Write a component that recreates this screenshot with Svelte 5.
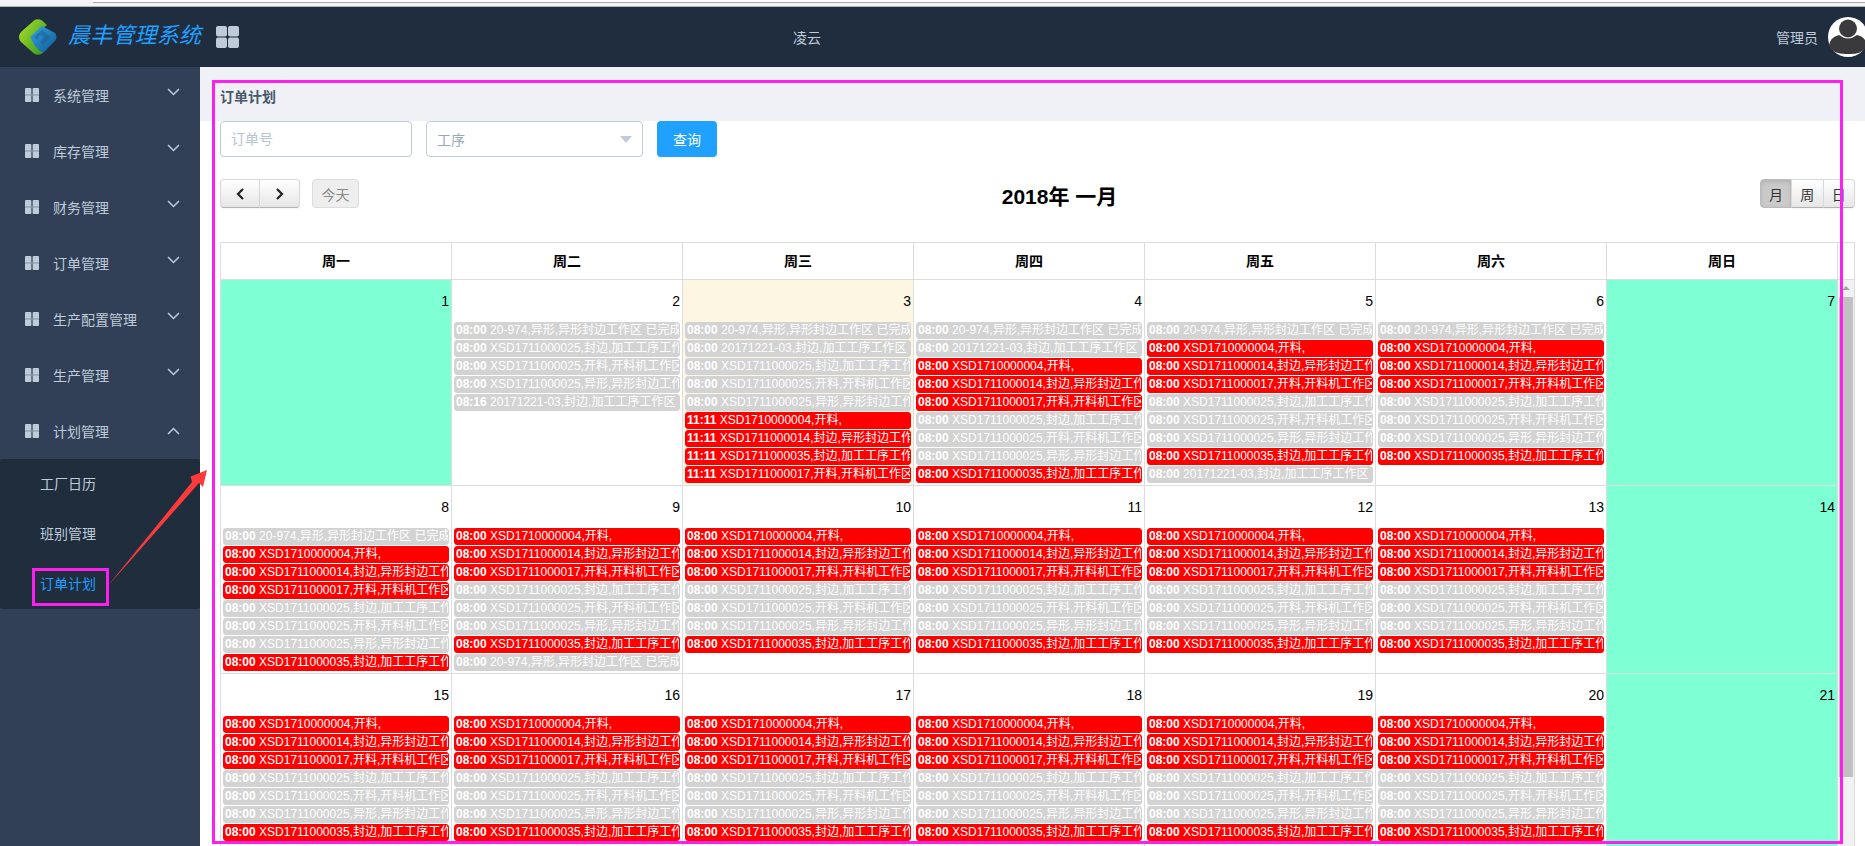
<script>
  const nav = ['系统管理', '库存管理', '财务管理', '订单管理', '生产配置管理', '生产管理'];
  const subs = ['工厂日历', '班别管理', '订单计划'];
  const weekdays = ['周一', '周二', '周三', '周四', '周五', '周六', '周日'];

  const TXT = {
    done: ['20-974,异形,异形封边工作区 已完成', 0],
    cut: ['20171221-03,封边,加工工序工作区', 0],
    a: ['XSD1710000004,开料,', 1],
    b: ['XSD1711000014,封边,异形封边工作区', 1],
    c: ['XSD1711000017,开料,开料机工作区', 1],
    d: ['XSD1711000025,封边,加工工序工作区', 0],
    e: ['XSD1711000025,开料,开料机工作区', 0],
    f: ['XSD1711000025,异形,异形封边工作区', 0],
    g: ['XSD1711000035,封边,加工工序工作区', 1]
  };
  const list = (keys, time = '08:00') =>
    keys.split(' ').map((k) => ({ time, text: TXT[k][0], red: TXT[k][1] === 1 }));
  const week = 'a b c d e f g';

  const wed = [...list('done cut d e f'), ...list('a b g c', '11:11')];
  const tue = [...list('done d e f'), ...list('cut', '08:16')];

  const rows = [
    [
      { n: 1, off: true, ev: [] },
      { n: 2, ev: tue },
      { n: 3, today: true, ev: wed },
      { n: 4, ev: list('done cut a b c d e f g') },
      { n: 5, ev: list('done a b c d e f g cut') },
      { n: 6, ev: list('done a b c d e f g') },
      { n: 7, off: true, ev: [] }
    ],
    [
      { n: 8, ev: list('done a b c d e f g') },
      { n: 9, ev: list('a b c d e f g done') },
      { n: 10, ev: list(week) },
      { n: 11, ev: list(week) },
      { n: 12, ev: list(week) },
      { n: 13, ev: list(week) },
      { n: 14, off: true, ev: [] }
    ],
    [
      { n: 15, ev: list(week) },
      { n: 16, ev: list(week) },
      { n: 17, ev: list(week) },
      { n: 18, ev: list(week) },
      { n: 19, ev: list(week) },
      { n: 20, ev: list(week) },
      { n: 21, off: true, ev: [] }
    ]
  ];
</script>

<div class="page">
  <div class="chrome"><span class="urlbar"></span></div>

  <header class="top">
    <svg class="logo" viewBox="0 0 40 36" aria-hidden="true">
      <defs>
        <linearGradient id="lg" x1="0" y1="0.2" x2="0.9" y2="0.9">
          <stop offset="0" stop-color="#a4dc2a" />
          <stop offset="1" stop-color="#3a9a24" />
        </linearGradient>
        <linearGradient id="lb" x1="0" y1="0" x2="1" y2="1">
          <stop offset="0" stop-color="#36a6e6" />
          <stop offset="1" stop-color="#0d5a94" />
        </linearGradient>
      </defs>
      <path d="M16 1.500 Q20 -1 24 1.500 L29 6 L14 18 L29 30 L24 34.500 Q20 37 16 34.500 L3 23 Q-1 18 3 13 Z" fill="url(#lg)" />
      <path d="M24 7 L37 14 Q40 18 37 22 L27 32 Q24 34 22 32 L17 27 L12 18 Z" fill="url(#lb)" />
      <path d="M16 18 L24 11 L33 18 L25 26 L22 23 L26 18 L22 16 L19 21 Z" fill="#1d5f96" opacity="0.55" />
    </svg>
    <span class="brand">晨丰管理系统</span>
    <svg class="tile" viewBox="0 0 23 22" aria-hidden="true">
      <rect x="0" y="0" width="11" height="10.5" rx="2" />
      <rect x="12" y="0" width="11" height="10.5" rx="2" />
      <rect x="0" y="11.5" width="11" height="10.5" rx="2" />
      <rect x="12" y="11.5" width="11" height="10.5" rx="2" />
    </svg>
    <span class="org">凌云</span>
    <span class="user">管理员</span>
    <svg class="avatar" viewBox="0 0 40 40" aria-hidden="true">
      <circle cx="20" cy="20" r="20" fill="#fff" />
      <circle cx="20" cy="11.500" r="9" fill="#3a3a3c" />
      <path d="M1 29 Q2 20 11 18 Q20 25 29 18 Q38 20 39 29 Q34 38 20 37 Q6 38 1 29 Z" fill="#3a3a3c" />
    </svg>
  </header>

  <div class="body">
    <aside class="side">
      {#each nav as item}
        <div class="nav-item">
          <svg class="blocks" viewBox="0 0 14 14" aria-hidden="true">
            <rect x="0" y="0" width="6.400" height="14" rx="1" />
            <rect x="7.600" y="0" width="6.400" height="14" rx="1" />
            <rect class="notch" x="0" y="6.500" width="14" height="1" />
          </svg>
          <span class="nav-label">{item}</span>
          <svg class="chev" viewBox="0 0 13 8" aria-hidden="true"><path d="M1 1 L6.500 6.500 L12 1" /></svg>
        </div>
      {/each}
      <div class="nav-item open">
        <svg class="blocks" viewBox="0 0 14 14" aria-hidden="true">
          <rect x="0" y="0" width="6.400" height="14" rx="1" />
          <rect x="7.600" y="0" width="6.400" height="14" rx="1" />
          <rect class="notch" x="0" y="6.500" width="14" height="1" />
        </svg>
        <span class="nav-label">计划管理</span>
        <svg class="chev" viewBox="0 0 13 8" aria-hidden="true"><path d="M1 7 L6.500 1.500 L12 7" /></svg>
      </div>
      <div class="subs">
        {#each subs as s, i}
          <div class="sub" class:active={i === 2}>{s}</div>
        {/each}
      </div>
    </aside>

    <main class="main">
      <div class="crumb">订单计划</div>
      <section class="panel">
        <div class="filters">
          <input class="field order" placeholder="订单号" />
          <div class="field select">
            <span>工序</span>
            <i class="caret"></i>
          </div>
          <button class="query">查询</button>
        </div>

        <div class="toolbar">
          <div class="tb-left">
            <div class="group">
              <button class="fc">
                <svg viewBox="0 0 10 14" aria-hidden="true"><path d="M8 2 L3 7 L8 12" /></svg>
              </button>
              <button class="fc">
                <svg viewBox="0 0 10 14" aria-hidden="true"><path d="M2 2 L7 7 L2 12" /></svg>
              </button>
            </div>
            <button class="fc today-btn">今天</button>
          </div>
          <h2 class="month">2018年 一月</h2>
          <div class="group views">
            <button class="fc on">月</button>
            <button class="fc">周</button>
            <button class="fc">日</button>
          </div>
        </div>

        <div class="cal">
          <div class="head">
            {#each weekdays as d}
              <div class="hcell">{d}</div>
            {/each}
            <div class="hfill"></div>
          </div>
          <div class="cal-body">
            <div class="weeks">
              {#each rows as row}
                <div class="week">
                  {#each row as cell}
                    <div class="day" class:off={cell.off} class:today={cell.today}>
                      <div class="num">{cell.n}</div>
                      {#each cell.ev as e}
                        <div class="ev" class:red={e.red}><b>{e.time}</b> {e.text}</div>
                      {/each}
                    </div>
                  {/each}
                </div>
              {/each}
            </div>
            <div class="scroll">
              <i class="up"></i>
              <div class="thumb"></div>
            </div>
          </div>
        </div>
      </section>
    </main>
  </div>

  <div class="mark big"></div>
  <div class="mark small"></div>
  <svg class="arrow" viewBox="0 0 1865 846" aria-hidden="true">
    <path d="M107 587 L192 482 L190.500 476.500 L207 470 L203 487 L199 483 Z" fill="#fb3a3a" />
  </svg>
</div>

<style>
  :global(body) {
    margin: 0;
    background: #fff;
  }
  .page {
    position: relative;
    width: 1865px;
    height: 846px;
    overflow: hidden;
    display: flex;
    flex-direction: column;
    font-family: 'Liberation Sans', 'Noto Sans CJK SC', sans-serif;
    font-size: 14px;
    color: #000;
  }
  .chrome {
    height: 7px;
    flex: none;
    box-sizing: border-box;
    background: #f4f4f4;
    border-bottom: 1px solid #b5b5b5;
    padding-left: 93px;
  }
  .urlbar {
    display: block;
    height: 2px;
    background: #fff;
    border-bottom: 1px solid #a8a8a8;
  }
  .top {
    height: 60px;
    flex: none;
    display: flex;
    align-items: center;
    background: #202d3f;
    overflow: hidden;
  }
  .logo {
    width: 40px;
    height: 36px;
    margin-left: 18px;
    flex: none;
  }
  .brand {
    margin-left: 10px;
    width: 135px;
    flex: none;
    font-size: 22px;
    letter-spacing: 0.2px;
    line-height: 28px;
    margin-bottom: 2px;
    font-style: italic;
    color: #20a0ff;
    white-space: nowrap;
  }
  .tile {
    width: 23px;
    height: 22px;
    margin-left: 13px;
    flex: none;
    fill: #bfcbd9;
  }
  .org {
    margin-left: 554px;
    color: #bfcbd9;
    font-size: 14px;
  }
  .user {
    margin-left: auto;
    color: #bfcbd9;
    font-size: 14px;
  }
  .avatar {
    width: 40px;
    height: 40px;
    margin-left: 10px;
    margin-right: -3px;
    flex: none;
  }
  .body {
    flex: 1;
    display: flex;
    min-height: 0;
  }
  .side {
    width: 200px;
    flex: none;
    background: #324057;
  }
  .nav-item {
    height: 56px;
    display: flex;
    align-items: center;
    padding-left: 25px;
    color: #bfcbd9;
  }
  .blocks {
    width: 14px;
    height: 14px;
    fill: #bfcbd9;
    flex: none;
  }
  .notch {
    fill: #8494ab;
  }
  .nav-label {
    margin-left: 14px;
    flex: 1;
  }
  .chev {
    width: 13px;
    height: 8px;
    margin: -6px 20px 0 0;
    fill: none;
    stroke: #bfcbd9;
    stroke-width: 1.5;
    flex: none;
  }
  .open .chev {
    margin-top: 0;
  }
  .subs {
    background: #1f2d3d;
    border-radius: 2px;
  }
  .sub {
    height: 50px;
    line-height: 50px;
    padding-left: 40px;
    color: #bfcbd9;
  }
  .sub.active {
    color: #20a0ff;
  }
  .main {
    flex: 1;
    min-width: 0;
    background: #eff1f6;
    display: flex;
    flex-direction: column;
  }
  .crumb {
    height: 54px;
    flex: none;
    box-sizing: border-box;
    padding: 20px 0 0 20px;
    line-height: 20px;
    font-weight: 700;
    color: #48576a;
  }
  .panel {
    flex: 1;
    background: #fff;
    padding: 0 10px 0 20px;
  }
  .filters {
    display: flex;
    gap: 14px;
  }
  .field {
    height: 36px;
    box-sizing: border-box;
    border: 1px solid #bfcbd9;
    border-radius: 4px;
    background: #fff;
    font: inherit;
    padding: 0 10px;
    outline: none;
  }
  .order {
    width: 192px;
  }
  .order::placeholder {
    color: #b8c3d2;
    opacity: 1;
  }
  .select {
    width: 217px;
    display: flex;
    align-items: center;
    justify-content: space-between;
    color: #97a8be;
  }
  .caret {
    width: 0;
    height: 0;
    border-left: 6px solid transparent;
    border-right: 6px solid transparent;
    border-top: 7px solid #c0ccda;
  }
  .query {
    width: 60px;
    height: 36px;
    border: 0;
    border-radius: 4px;
    background: #20a0ff;
    color: #fff;
    font: inherit;
    padding: 0;
  }
  .toolbar {
    display: flex;
    align-items: flex-start;
    margin-top: 22px;
    height: 29px;
  }
  .tb-left {
    display: flex;
    gap: 12px;
  }
  .group {
    display: flex;
  }
  .month {
    flex: 1;
    margin: 0;
    padding-top: 3px;
    text-align: center;
    font-size: 21px;
    font-weight: 700;
    line-height: 29px;
  }
  .fc {
    height: 29px;
    box-sizing: border-box;
    padding: 0;
    font: inherit;
    color: #333;
    background: linear-gradient(#fff, #e6e6e6);
    border: 1px solid #d9d9d9;
    border-bottom-color: #b3b3b3;
    box-shadow: inset 0 1px 0 rgba(255, 255, 255, 0.2), 0 1px 2px rgba(0, 0, 0, 0.05);
    display: flex;
    align-items: center;
    justify-content: center;
  }
  .group .fc {
    width: 40px;
  }
  .group .fc + .fc {
    margin-left: -1px;
    width: 41px;
  }
  .group .fc:first-child {
    border-radius: 4px 0 0 4px;
  }
  .group .fc:last-child {
    border-radius: 0 4px 4px 0;
  }
  .fc svg {
    width: 10px;
    height: 14px;
    fill: none;
    stroke: #222;
    stroke-width: 2.2;
  }
  .today-btn {
    width: 47px;
    border-radius: 4px;
    color: #888;
    background: #eee;
    border-color: #ddd;
    box-shadow: none;
  }
  .views .fc {
    width: 32px;
  }
  .views .fc + .fc {
    width: 32.5px;
  }
  .views {
    width: 95px;
  }
  .views .fc.on {
    background: #cacaca;
    border-color: #bbb;
    box-shadow: inset 0 2px 4px rgba(0, 0, 0, 0.12);
  }
  .cal {
    margin-top: 34px;
    border-left: 1px solid #ddd;
    border-right: 1px solid #ddd;
    border-top: 1px solid #ddd;
  }
  .head {
    display: grid;
    grid-template-columns: repeat(7, 231px) 16px;
    height: 36px;
    box-sizing: content-box;
    border-bottom: 1px solid #ddd;
  }
  .hcell {
    border-right: 1px solid #ddd;
    text-align: center;
    line-height: 36px;
    font-weight: 700;
  }
  .cal-body {
    display: flex;
  }
  .weeks {
    width: 1617px;
    flex: none;
  }
  .week {
    display: grid;
    grid-template-columns: repeat(7, 231px);
    border-bottom: 1px solid #ddd;
    box-sizing: border-box;
    height: 206px;
  }
  .week:nth-child(2) {
    height: 188px;
  }
  .week:nth-child(3) {
    height: 200px;
  }
  .day {
    border-right: 1px solid #ddd;
    min-width: 0;
  }
  .day.off {
    background: #7fffd4;
  }
  .day.today {
    background: #fcf6e3;
  }
  .num {
    height: 42px;
    line-height: 42px;
    text-align: right;
    padding-right: 2px;
  }
  .ev {
    height: 17px;
    box-sizing: border-box;
    line-height: 15px;
    margin: 0 2px 1px;
    padding: 0 0 0 1px;
    border: 1px solid #d3d3d3;
    border-radius: 3px;
    background: #d3d3d3;
    color: #fff;
    font-size: 12px;
    white-space: nowrap;
    overflow: hidden;
  }
  .ev.red {
    background: #ff0000;
    border-color: #ff0000;
  }
  .scroll {
    width: 16px;
    flex: none;
    background: #f1f1f1;
    position: relative;
    height: 600px;
  }
  .up {
    position: absolute;
    top: 6px;
    left: 4px;
    width: 0;
    height: 0;
    border-left: 4px solid transparent;
    border-right: 4px solid transparent;
    border-bottom: 4px solid #a3a3a3;
  }
  .thumb {
    position: absolute;
    top: 17px;
    left: 1px;
    width: 14px;
    height: 480px;
    background: #c1c1c1;
  }
  .mark {
    position: absolute;
    box-sizing: border-box;
    border: 3px solid #fb1ff0;
    pointer-events: none;
  }
  .mark.big {
    left: 212px;
    top: 80px;
    width: 1631px;
    height: 764px;
  }
  .mark.small {
    left: 32px;
    top: 568px;
    width: 77px;
    height: 38px;
  }
  .arrow {
    position: absolute;
    left: 0;
    top: 0;
    width: 1865px;
    height: 846px;
    pointer-events: none;
  }
</style>
